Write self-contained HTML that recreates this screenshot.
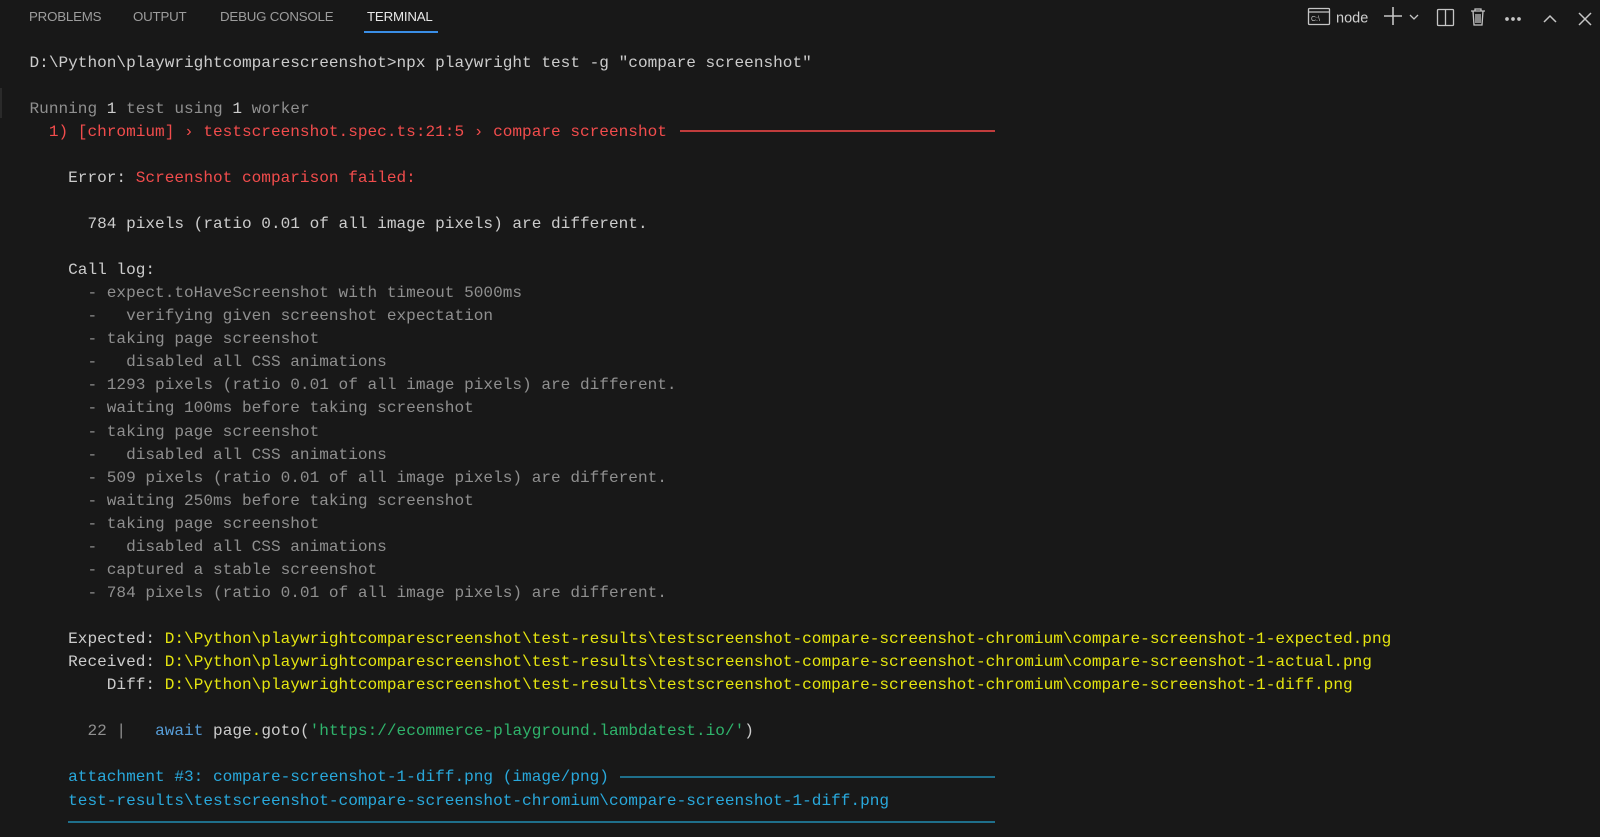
<!DOCTYPE html>
<html><head><meta charset="utf-8"><style>
html,body{margin:0;padding:0;background:#181818;width:1600px;height:837px;overflow:hidden;position:relative}
.tabs{position:absolute;top:9px;left:29px;font-family:"Liberation Sans",sans-serif;font-size:13.3px;color:#9d9d9d;letter-spacing:-0.2px}
.tabs span{position:absolute;white-space:nowrap}
pre{position:absolute;left:29.5px;top:51.5px;margin:0;font-family:"Liberation Mono",monospace;font-size:16.1px;line-height:23.06px;color:#cccccc}
.g{color:#8f8f8f}.r{color:#f14c4c}.y{color:#e5e510}.b{color:#29a8db}.w{color:#e5e5e5}
.kw{color:#569cd6}.st{color:#2fb36b}
.ln{position:absolute;height:1.5px}
</style></head><body>
<div class="tabs">
<span style="left:0">PROBLEMS</span>
<span style="left:104px">OUTPUT</span>
<span style="left:191px">DEBUG CONSOLE</span>
<span style="left:338px;color:#e7e7e7">TERMINAL</span>
</div>
<div style="position:absolute;left:364px;top:31px;width:74px;height:1.5px;background:#3a8ee6"></div>
<div style="position:absolute;left:0;top:88px;width:2px;height:30px;background:#2a2a2a"></div>

<svg style="position:absolute;left:1300px;top:4px" width="300" height="26" viewBox="0 0 300 26" fill="none" stroke="#c5c5c5" stroke-width="1.3">
<rect x="8.5" y="4.5" width="21" height="16" rx="1"/><line x1="8.5" y1="8" x2="29.5" y2="8"/>
<text x="11" y="17" font-family="Liberation Sans" font-size="7" fill="#c5c5c5" stroke="none">C:\</text>
<text x="36" y="18.5" font-family="Liberation Sans" font-size="14.5" fill="#d0d0d0" stroke="none">node</text>
<line x1="84" y1="12" x2="102" y2="12" stroke-width="1.6"/><line x1="93" y1="3" x2="93" y2="21" stroke-width="1.6"/>
<polyline points="110,11 114,15 118,11"/>
<rect x="137.5" y="5.5" width="16" height="16" rx="1"/><line x1="145.5" y1="5.5" x2="145.5" y2="21.5"/>
<path d="M171 7h14M175 7V5h6v2M173 7l1 14h8l1-14M176 10v9M178 10v9M180 10v9"/>
<circle cx="207" cy="15" r="1.2" fill="#c5c5c5"/><circle cx="213" cy="15" r="1.2" fill="#c5c5c5"/><circle cx="219" cy="15" r="1.2" fill="#c5c5c5"/>
<polyline points="244,18 250,12 256,18" stroke-width="1.5"/>
<path d="M279 9l12 12M291 9l-12 12" stroke-width="1.5"/>
</svg>

<pre>D:\Python\playwrightcomparescreenshot>npx playwright test -g "compare screenshot"

<span class="g">Running </span>1<span class="g"> test using </span>1<span class="g"> worker</span>
<span class="r">  1) [chromium] › testscreenshot.spec.ts:21:5 › compare screenshot</span>

    Error: <span class="r">Screenshot comparison failed:</span>

      784 pixels (ratio 0.01 of all image pixels) are different.

    Call log:
<span class="g">      - expect.toHaveScreenshot with timeout 5000ms
      -   verifying given screenshot expectation
      - taking page screenshot
      -   disabled all CSS animations
      - 1293 pixels (ratio 0.01 of all image pixels) are different.
      - waiting 100ms before taking screenshot
      - taking page screenshot
      -   disabled all CSS animations
      - 509 pixels (ratio 0.01 of all image pixels) are different.
      - waiting 250ms before taking screenshot
      - taking page screenshot
      -   disabled all CSS animations
      - captured a stable screenshot
      - 784 pixels (ratio 0.01 of all image pixels) are different.</span>

    Expected: <span class="y">D:\Python\playwrightcomparescreenshot\test-results\testscreenshot-compare-screenshot-chromium\compare-screenshot-1-expected.png</span>
    Received: <span class="y">D:\Python\playwrightcomparescreenshot\test-results\testscreenshot-compare-screenshot-chromium\compare-screenshot-1-actual.png</span>
        Diff: <span class="y">D:\Python\playwrightcomparescreenshot\test-results\testscreenshot-compare-screenshot-chromium\compare-screenshot-1-diff.png</span>

<span class="g">      22 |</span>   <span class="kw">await</span> page<span class="y">.</span>goto(<span class="st">'https://ecommerce-playground.lambdatest.io/'</span>)

<span class="b">    attachment #3: compare-screenshot-1-diff.png (image/png)</span>
<span class="b">    test-results\testscreenshot-compare-screenshot-chromium\compare-screenshot-1-diff.png</span>
</pre>
<div class="ln" style="left:680px;top:130px;width:315px;background:#c03c3c"></div>
<div class="ln" style="left:620px;top:776px;width:375px;background:#1f6f8b"></div>
<div class="ln" style="left:68px;top:821px;width:927px;background:#1f6f8b"></div>
</body></html>
